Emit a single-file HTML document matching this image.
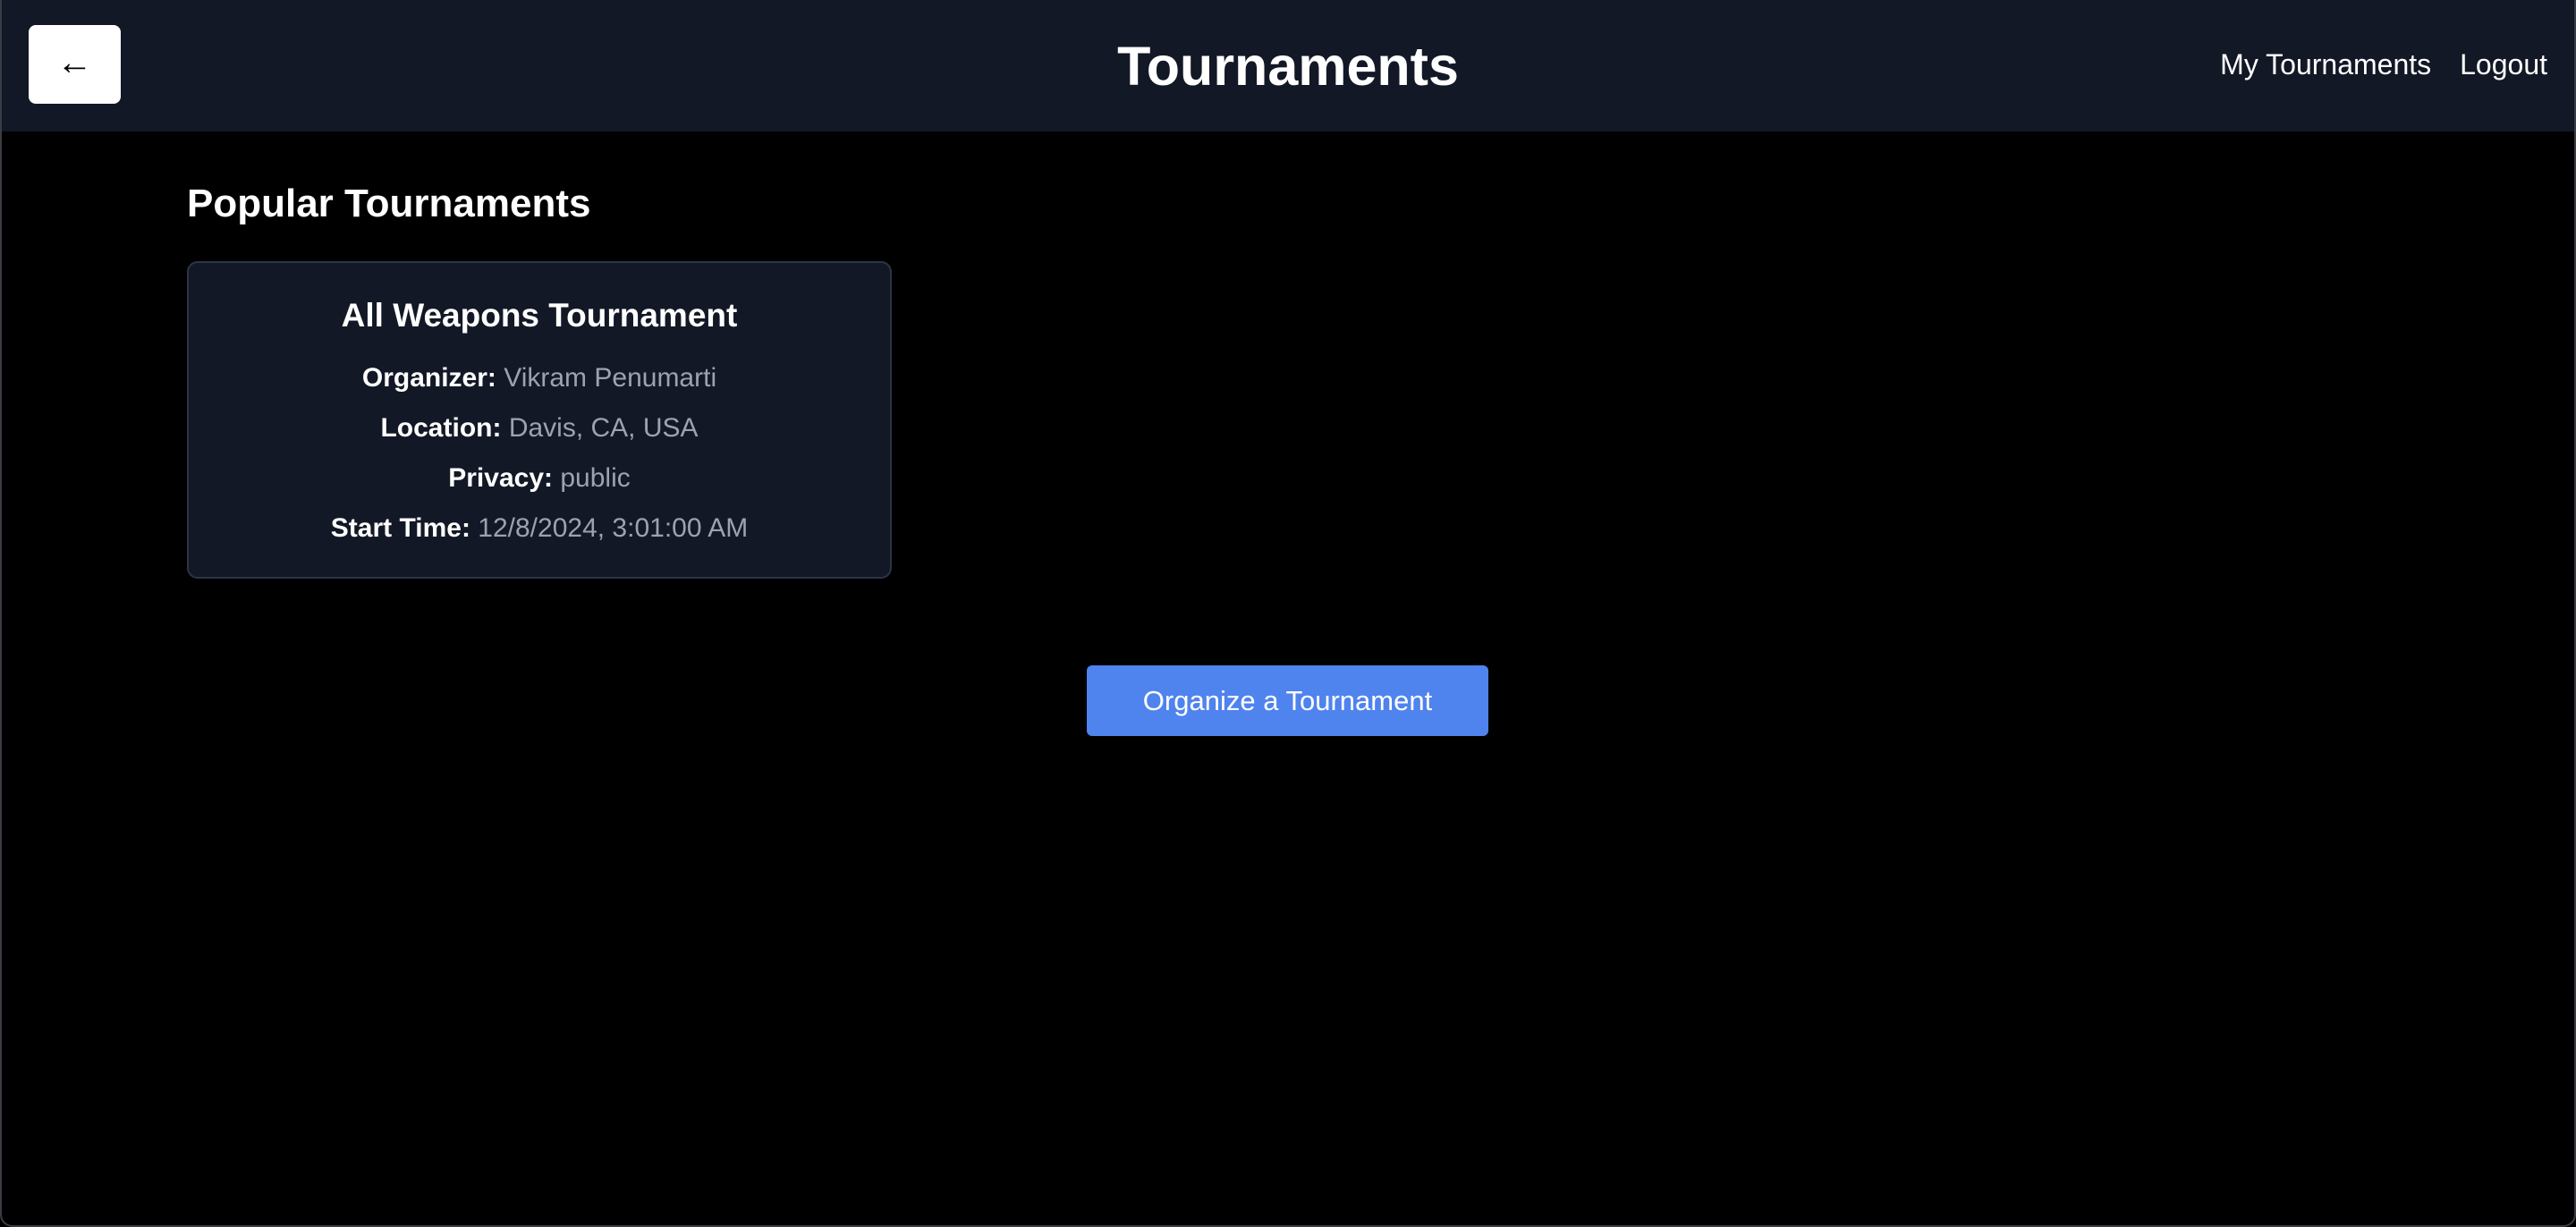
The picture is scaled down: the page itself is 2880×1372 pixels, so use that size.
<!DOCTYPE html>
<html><head><meta charset="utf-8"><style>
html,body{margin:0;padding:0;}
body{width:2880px;height:1372px;background:#000;font-family:"Liberation Sans",sans-serif;color:#fff;position:relative;overflow:hidden;}
.frame{position:absolute;inset:0;border:2px solid #3a3d44;border-top:none;border-radius:0 0 14px 14px;pointer-events:none;}
.hdr{position:absolute;left:0;top:0;width:2880px;height:147px;background:#131826;}
.back{position:absolute;left:32px;top:28px;width:103px;height:88px;background:#fff;border-radius:8px;color:#000;font-size:40px;line-height:84px;text-align:center;}
.title{position:absolute;left:0;width:2880px;top:36px;text-align:center;font-weight:bold;font-size:61px;line-height:76px;letter-spacing:0px;}
.nav{position:absolute;right:32px;top:50px;font-size:32px;line-height:44px;}
.nav span{margin-left:32px;}
h2{position:absolute;left:209px;top:199px;margin:0;font-size:44px;line-height:58px;font-weight:bold;}
.card{position:absolute;left:209px;top:292px;width:788px;height:355px;background:#131826;border:2px solid #2e3445;border-radius:12px;box-sizing:border-box;text-align:center;}
.ct{position:absolute;left:0;width:100%;top:36px;font-size:37px;line-height:46px;font-weight:bold;}
.rows{position:absolute;left:0;width:100%;top:101px;font-size:30px;line-height:56px;}
.rows span{color:#9ca3af;}
.btn{position:absolute;left:1215px;top:744px;width:449px;height:79px;background:#4f83ee;border-radius:6px;font-size:31px;line-height:79px;text-align:center;color:#fff;}
</style></head><body>
<div class="hdr">
<div class="back">&#8592;</div>
<div class="title">Tournaments</div>
<div class="nav"><span>My Tournaments</span><span>Logout</span></div>
</div>
<h2>Popular Tournaments</h2>
<div class="card">
<div class="ct">All Weapons Tournament</div>
<div class="rows">
<div><b>Organizer:</b> <span>Vikram Penumarti</span></div>
<div><b>Location:</b> <span>Davis, CA, USA</span></div>
<div><b>Privacy:</b> <span>public</span></div>
<div><b>Start Time:</b> <span>12/8/2024, 3:01:00 AM</span></div>
</div>
</div>
<div class="btn">Organize a Tournament</div>
<div class="frame"></div>
</body></html>
